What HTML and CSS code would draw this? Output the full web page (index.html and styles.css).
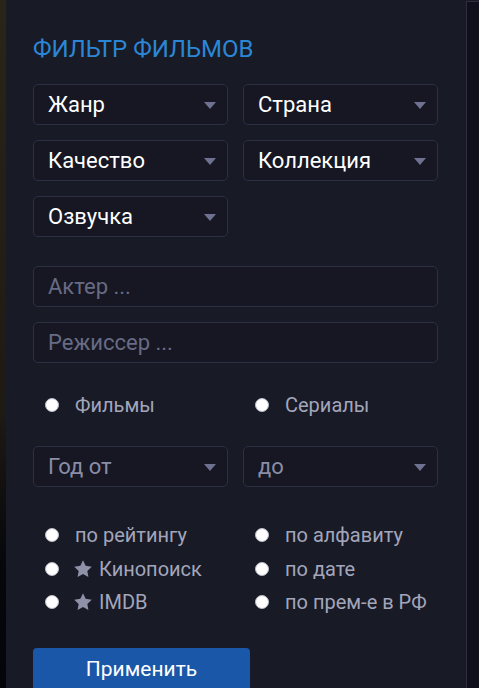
FILE: index.html
```html
<!DOCTYPE html>
<html lang="ru">
<head>
<meta charset="utf-8">
<link rel="stylesheet" href="styles.css">
</head>
<body>
<div class="page">
  <div class="edge"></div>
  <aside class="panel">
    <h2 class="title">ФИЛЬТР ФИЛЬМОВ</h2>
    <div class="selects">
      <div class="select"><span>Жанр</span><i class="caret"></i></div>
      <div class="select"><span>Страна</span><i class="caret"></i></div>
      <div class="select"><span>Качество</span><i class="caret"></i></div>
      <div class="select"><span>Коллекция</span><i class="caret"></i></div>
      <div class="select"><span>Озвучка</span><i class="caret"></i></div>
    </div>
    <div class="inputs">
      <div class="input">Актер ...</div>
      <div class="input">Режиссер ...</div>
    </div>
    <div class="types">
      <label class="radio"><span class="dot"></span>Фильмы</label>
      <label class="radio"><span class="dot"></span>Сериалы</label>
    </div>
    <div class="years">
      <div class="select muted"><span>Год от</span><i class="caret"></i></div>
      <div class="select muted"><span>до</span><i class="caret"></i></div>
    </div>
    <div class="sorts">
      <label class="radio"><span class="dot"></span>по рейтингу</label>
      <label class="radio"><span class="dot"></span>по алфавиту</label>
      <label class="radio"><span class="dot"></span><svg class="star" viewBox="0 0 24 24"><path d="M12 1.5l3.2 6.7 7.3 1-5.3 5.1 1.3 7.3L12 18.1l-6.5 3.5 1.3-7.3-5.3-5.1 7.3-1z"/></svg>Кинопоиск</label>
      <label class="radio"><span class="dot"></span>по дате</label>
      <label class="radio"><span class="dot"></span><svg class="star" viewBox="0 0 24 24"><path d="M12 1.5l3.2 6.7 7.3 1-5.3 5.1 1.3 7.3L12 18.1l-6.5 3.5 1.3-7.3-5.3-5.1 7.3-1z"/></svg>IMDB</label>
      <label class="radio"><span class="dot"></span>по прем-е в РФ</label>
    </div>
    <button class="apply">Применить</button>
  </aside>
  <div class="side"></div>
</div>
</body>
</html>
```
FILE: styles.css
```css
html, body {
  margin: 0;
  padding: 0;
  background: #181a26;
  height: 100%;
  overflow: hidden;
}
body {
  font-family: Roboto, "Noto Sans", sans-serif;
}
.page {
  display: flex;
  height: 688px;
}
.edge {
  width: 6px;
  flex: none;
  background: linear-gradient(#2a2419, #1e1a14 60%, #05070b 82%, #03050a);
}
.panel {
  width: 433px;
  flex: none;
  padding: 35px 0 0 27px;
  background: #181a26;
  box-sizing: content-box;
}
.side {
  flex: 1;
  margin-top: 1px;
  background: #100f1c;
  border-left: 1px solid #2c2d3f;
  border-top: 1px solid #2c2d3f;
}
.title {
  margin: 0;
  font-size: 24px;
  line-height: 28px;
  font-weight: 400;
  color: #2b87d6;
}
.selects {
  margin-top: 21px;
  display: grid;
  grid-template-columns: 195px 195px;
  gap: 15px;
}
.select {
  height: 41px;
  box-sizing: border-box;
  border: 1px solid #2d2f44;
  border-radius: 5px;
  background: #161722;
  display: flex;
  align-items: center;
  justify-content: space-between;
  padding: 0 11px 0 14px;
  color: #ffffff;
  font-size: 22px;
}
.select.muted { color: #8a8da6; }
.caret {
  width: 0;
  height: 0;
  border-left: 6.5px solid transparent;
  border-right: 6.5px solid transparent;
  border-top: 7px solid #6e7190;
  margin-top: 2px;
}
.inputs {
  margin-top: 29px;
  display: flex;
  flex-direction: column;
  gap: 15px;
  width: 405px;
}
.input {
  height: 41px;
  box-sizing: border-box;
  border: 1px solid #2d2f44;
  border-radius: 5px;
  background: #161722;
  display: flex;
  align-items: center;
  padding: 0 14px;
  color: #686b84;
  font-size: 22px;
}
.types {
  margin-top: 28px;
  display: grid;
  grid-template-columns: 210px 195px;
  height: 28px;
}
.radio {
  display: flex;
  align-items: center;
  padding-left: 12px;
  color: #a3a6bb;
  font-size: 20px;
  height: 28px;
}
.dot {
  width: 14px;
  height: 14px;
  box-sizing: border-box;
  border-radius: 50%;
  background: #ffffff;
  border: 1px solid #b9bbc6;
  margin-right: 16px;
  flex: none;
}
.years {
  margin-top: 27px;
  display: grid;
  grid-template-columns: 195px 195px;
  gap: 15px;
}
.sorts {
  margin-top: 34px;
  display: grid;
  grid-template-columns: 210px 195px;
  row-gap: 5.5px;
}
.star {
  width: 20px;
  height: 20px;
  fill: #8e91a8;
  margin-right: 6px;
  margin-left: -2px;
  flex: none;
}
.apply {
  margin-top: 32px;
  width: 217px;
  height: 44px;
  border: none;
  border-radius: 4px;
  background: #1b57a9;
  color: #ffffff;
  font-family: Roboto, sans-serif;
  font-size: 21px;
  padding: 0 0 2px;
  display: block;
}
```
